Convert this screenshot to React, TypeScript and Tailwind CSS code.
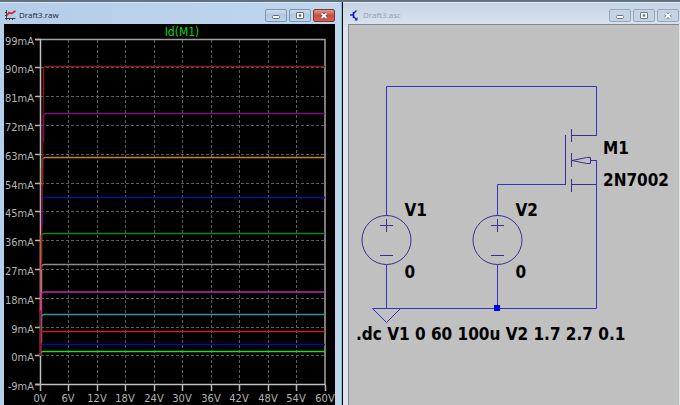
import type { ReactNode } from "react";

const uiFont = "font-['Open_Sans','Noto_Sans',sans-serif]";
const plotFont = "font-['DejaVu_Sans_Condensed','DejaVu_Sans',sans-serif]";

const levels = ["99mA", "90mA", "81mA", "72mA", "63mA", "54mA", "45mA", "36mA", "27mA", "18mA", "9mA", "0mA", "-9mA"];
const volts = ["0V", "6V", "12V", "18V", "24V", "30V", "36V", "42V", "48V", "54V", "60V"];

const rowY = (i: number) => Math.floor(39 + i * 28.8) + 0.5;
const colX = (i: number) => Math.floor(40 + i * 28.5) + 0.5;

const traces = [
  { y: 66.5, color: "#8c1717", knee: 44 },
  { y: 113.5, color: "#7c107c", knee: 44 },
  { y: 157.5, color: "#c5842c", knee: 43 },
  { y: 197.5, color: "#0b0b9c", knee: 43 },
  { y: 233.5, color: "#0b8a0b", knee: 42 },
  { y: 264.5, color: "#8d8d8d", knee: 42 },
  { y: 292, color: "#b32bb3", knee: 42 },
  { y: 314.5, color: "#329696", knee: 42 },
  { y: 331.5, color: "#c52121", knee: 41 },
  { y: 344.5, color: "#0b0ba0", knee: 41 },
  { y: 351.5, color: "#25dc25", knee: 41 },
];

function Controls({ active }: { active: boolean }) {
  const base = "flex h-[13px] w-[22px] items-center justify-center rounded-[2px] border";
  const plain = active
    ? "border-[#7d93ae] bg-linear-to-b from-[#cbdbec] via-[#b3c8df] to-[#bfd3e8]"
    : "border-[#98a9c0] bg-[#c4d3e4]";
  const close = active
    ? "border-[#7e3838] bg-linear-to-b from-[#dc9a8c] via-[#c8503c] to-[#cf6450]"
    : "border-[#98a9c0] bg-[#c4d3e4]";
  const edge = active ? "#5c6c82" : "#69778b";
  return (
    <div className="flex gap-[2px]">
      <button type="button" aria-label="Minimize" className={`${base} ${plain}`}>
        <svg width="10" height="9" viewBox="0 0 10 9">
          <rect x="1.5" y="4.5" width="7" height="3" rx="1" fill="#fff" stroke={edge} />
        </svg>
      </button>
      <button type="button" aria-label="Maximize" className={`${base} ${plain}`}>
        <svg width="10" height="9" viewBox="0 0 10 9">
          <rect x="1.5" y="1.5" width="7" height="6" rx="0.5" fill="#fff" stroke={edge} />
          <rect x="4" y="3.5" width="2" height="2" fill={edge} stroke={edge} strokeWidth="0.5" />
        </svg>
      </button>
      <button type="button" aria-label="Close" className={`${base} ${close}`}>
        <svg width="10" height="9" viewBox="0 0 10 9">
          <path d="M2.5 2.5 7.5 7M7.5 2.5 2.5 7" stroke={active ? "#7c3a3a" : edge} strokeWidth="3.4" />
          <path d="M2.5 2.5 7.5 7M7.5 2.5 2.5 7" stroke="#fff" strokeWidth="1.7" />
        </svg>
      </button>
    </div>
  );
}

function TitleBar({ title, active, icon }: { title: string; active: boolean; icon: ReactNode }) {
  return (
    <header className="flex h-[21px] shrink-0 items-center gap-[2px] pt-[3px]">
      {icon}
      <h1 className={`flex-1 text-[8px] leading-3 ${uiFont} ${active ? "text-[#1c2430]" : "text-[#929ca8]"}`}>{title}</h1>
      <Controls active={active} />
    </header>
  );
}

function PlotIcon() {
  return (
    <svg width="13" height="12" viewBox="0 0 13 12" fill="none">
      <path d="M2.5 1V11M1 9.5H11.5" stroke="#3c3c46" />
      <path d="M1 3.5H2.5M1 6.5H2.5M5.5 9.5V11M8.5 9.5V11" stroke="#3c3c46" />
      <path d="M3 6.5 5 3.5 7.5 4.5 11.5 2" stroke="#d22a2a" strokeWidth="1.6" />
    </svg>
  );
}

function SchematicIcon() {
  return (
    <svg width="13" height="12" viewBox="0 0 13 12" fill="none" stroke="#1818d8">
      <path d="M2 6H5M5.5 3V9" strokeWidth="1.6" />
      <path d="M5.5 4.5 8.5 1.5M5.5 7.5 8.5 10.5" strokeWidth="1.3" />
      <path d="M9.5 8V11.5H6.5Z" fill="#1818d8" stroke="none" />
    </svg>
  );
}

function Plot() {
  return (
    <svg viewBox="4 24 331 381" className={`block w-full text-[11px] ${plotFont}`} role="img" aria-label="Drain current of M1">
      <text x="182" y="36" textAnchor="middle" fill="#0fd40f" className="text-[12px]">Id(M1)</text>
      <g stroke="#5c5c5c" strokeDasharray="3 2">
        {levels.slice(1, -1).map((l, i) => (
          <path key={l} d={`M41 ${rowY(i + 1)}H325`} />
        ))}
        {volts.slice(1, -1).map((v, i) => (
          <path key={v} d={`M${colX(i + 1)} 40V384`} />
        ))}
      </g>
      <path d="M35 39.5H325V385" fill="none" stroke="#a2a2a2" strokeWidth="1.5" />
      <path d="M40.5 39V385M35 384.5H325.5" fill="none" stroke="#c0c0c0" strokeWidth="1.5" />
      <g stroke="#b8b8b8" strokeWidth="1.5">
        {levels.map((l, i) => (
          <path key={l} d={`M35 ${rowY(i)}H41`} />
        ))}
        {volts.map((v, i) => (
          <path key={v} d={`M${colX(i)} 385V391`} />
        ))}
      </g>
      <g fill="#b4b4b4">
        {levels.map((l, i) => (
          <text key={l} x="34" y={Math.round(rowY(i) + 5)} textAnchor="end">{l}</text>
        ))}
        {volts.map((v, i) => (
          <text key={v} x={Math.floor(colX(i))} y="402" textAnchor="middle">{v}</text>
        ))}
      </g>
      {traces.map((t) => (
        <path
          key={t.y}
          d={`M${t.knee - 0.5} ${Math.min(t.y + 28, 356)}V${t.y + 2}Q${t.knee} ${t.y} ${t.knee + 2} ${t.y}H325`}
          fill="none"
          stroke={t.color}
          strokeWidth="1.5"
        />
      ))}
      <path d="M43.5 70 42.5 180 41.5 270" fill="none" stroke="#8c1720" />
      <path d="M40.5 168V270" stroke="#d99a9a" />
      <path d="M40.5 235V312" stroke="#d45050" strokeWidth="1.4" />
      <path d="M40.5 310V356" stroke="#b01028" strokeWidth="1.6" />
    </svg>
  );
}

function VoltageSource({ x, name }: { x: number; name: string }) {
  return (
    <g>
      <circle cx={x} cy="240" r="24.5" fill="none" stroke="#3a2e90" />
      <path d={`M${x - 6.5} 225.5H${x + 6.5}M${x} 219V232M${x - 6.5} 255.5H${x + 6.5}`} stroke="#3a2e90" />
      <text x={x + 18} y="216">{name}</text>
      <text x={x + 18} y="278">0</text>
    </g>
  );
}

function Schematic() {
  return (
    <svg viewBox="349 25 330 380" className={`block w-full text-[17px] font-bold ${plotFont}`} role="img" aria-label="Circuit schematic">
      <g fill="none" stroke="#3434c4">
        <path d="M386.5 216V86.5H596.5V135.5" />
        <path d="M497.5 216V184.5H565.5" />
        <path d="M596.5 160V308.5H372.5L386.5 322.5 400.5 308.5" />
        <path d="M386.5 264.5V308.5M497.5 264.5V308.5" />
      </g>
      <g fill="none" stroke="#3a2e90">
        <path d="M565.5 135V185M571.5 129V142M571.5 153V167M571.5 179V192" />
        <path d="M571 135.5H597M571 184.5H597M590 160.5H597" />
        <path d="M572 160.5 586.5 157.5H590.5V163.5H586.5Z" />
      </g>
      <rect x="494" y="305" width="6" height="6" fill="#0000f0" />
      <VoltageSource x={386.5} name="V1" />
      <VoltageSource x={497.5} name="V2" />
      <text x="603" y="154">M1</text>
      <text x="603" y="186">2N7002</text>
      <text x="356" y="340">.dc V1 0 60 100u V2 1.7 2.7 0.1</text>
    </svg>
  );
}

export default function App() {
  return (
    <main className="flex h-screen overflow-hidden border-t-2 border-[#61717d] bg-[#0c1c24]">
      <section className="flex min-w-0 flex-1 flex-col border-t border-[#dbe8f5] bg-linear-to-r from-[#b4cde9] to-[#bfd6ee] pr-[6px] pl-1">
        <TitleBar title="Draft3.raw" active icon={<PlotIcon />} />
        <div className="min-h-0 flex-1 overflow-hidden bg-black">
          <Plot />
        </div>
      </section>
      <div className="w-px bg-[#7cc3d8]" />
      <div className="w-px bg-black" />
      <section className="flex min-w-0 flex-1 flex-col border-t border-[#e8eff7] bg-linear-to-b from-[#c4d3e3] to-[#dae5f1] to-6% pr-px pl-[5px]">
        <TitleBar title="Draft3.asc" active={false} icon={<SchematicIcon />} />
        <div className="min-h-0 flex-1 overflow-hidden border-t border-l border-[#80868c] bg-[#c0c0c0]">
          <Schematic />
        </div>
      </section>
    </main>
  );
}
